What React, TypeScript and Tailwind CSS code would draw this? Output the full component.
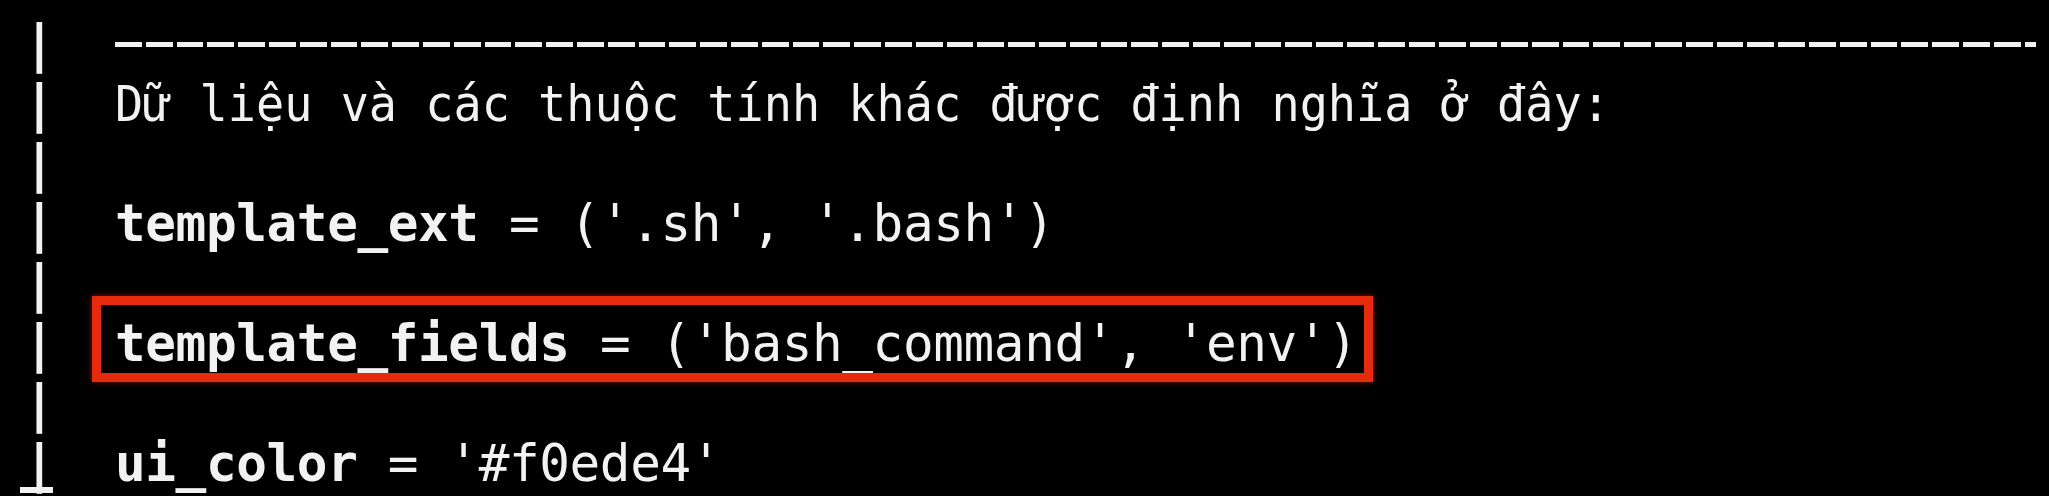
import React from 'react';

const rows: { kind: 'rule' | 'note' | 'blank' | 'code'; name?: string; rest?: string; boxed?: boolean; last?: boolean }[] = [
  { kind: 'rule' },
  { kind: 'note' },
  { kind: 'blank' },
  { kind: 'code', name: 'template_ext', rest: " = ('.sh', '.bash')" },
  { kind: 'blank' },
  { kind: 'code', name: 'template_fields', rest: " = ('bash_command', 'env')", boxed: true },
  { kind: 'blank' },
  { kind: 'code', name: 'ui_color', rest: " = '#f0ede4'", last: true },
];

function Pipe({ last }: { last?: boolean }) {
  return (
    <div className="relative w-[92px] shrink-0 pl-[1px] text-[51px] leading-[60px] font-bold">
      <span>|</span>
      {last && <div className="absolute left-[-3px] top-[53px] h-[6px] w-[33px] bg-[#f2f2f2]" />}
    </div>
  );
}

export default function App() {
  return (
    <div className="relative h-[496px] w-[2049px] overflow-hidden bg-black pl-[23px] pt-[14px] font-['DejaVu_Sans_Mono',monospace] text-[#f2f2f2]">
      {rows.map((row, i) => (
        <div key={i} className="flex h-[60px] items-start whitespace-pre">
          <Pipe last={row.last} />
          {row.kind === 'rule' && (
            <div className="mt-[28px] h-[5px] w-[1921px] bg-[image:repeating-linear-gradient(90deg,#f2f2f2_0px,#f2f2f2_26.8px,transparent_26.8px,transparent_30.8px)]" />
          )}
          {row.kind === 'note' && (
            <div className="origin-left scale-x-[0.937] text-[50px] leading-[60px]">
              Dữ liệu và các thuộc tính khác được định nghĩa ở đây:
            </div>
          )}
          {row.kind === 'code' && (
            <div className="relative text-[51px] leading-[60px] tracking-[-0.4px]">
              <span className="font-bold">{row.name}</span>
              <span>{row.rest}</span>
              {row.boxed && (
                <div className="absolute left-[-23px] top-[-18px] h-[86px] w-[1281px] border-[9px] border-[#e62a0e] shadow-[0_0_6px_rgba(230,42,14,0.55)]" />
              )}
            </div>
          )}
        </div>
      ))}
    </div>
  );
}
